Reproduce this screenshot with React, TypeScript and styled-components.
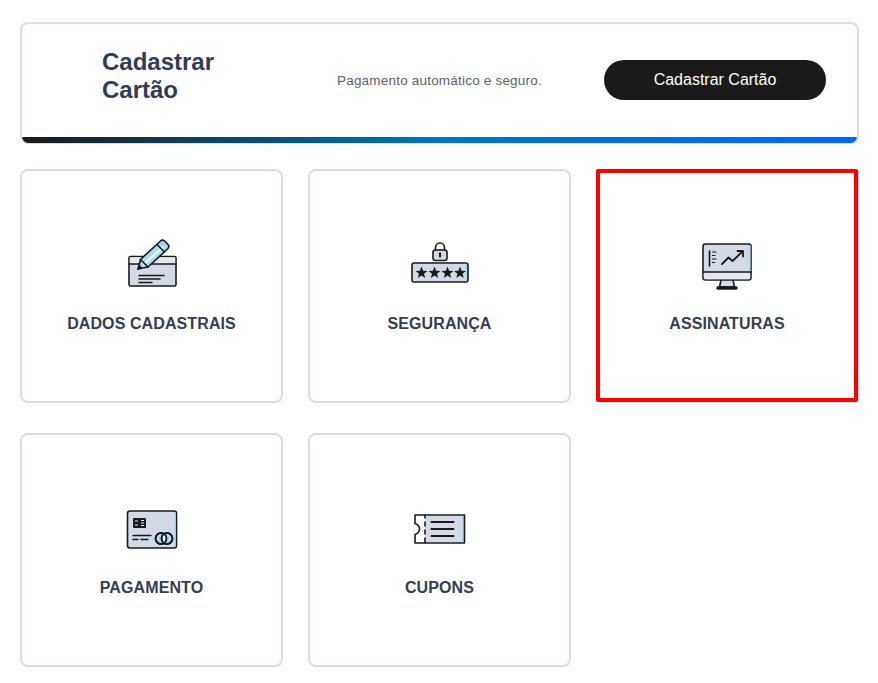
import { JSX } from "react";
import styled, { createGlobalStyle } from "styled-components";

const colors = {
  border: "#d8dde8",
  title: "#2e3c58",
  label: "#343e50",
  dark: "#1a1a1a",
  fill: "#d3dae6",
  light: "#a9d9f5",
};

const GlobalStyle = createGlobalStyle`
  html, body {
    margin: 0;
    background: #fff;
    font-family: "Liberation Sans", Arial, sans-serif;
  }
  * {
    box-sizing: border-box;
  }
`;

const Page = styled.div`
  width: 878px;
  height: 683px;
  padding: 22px 19px 0 20px;
  overflow: hidden;
`;

const Banner = styled.section`
  height: 122px;
  border: 2px solid ${colors.border};
  border-bottom-width: 1px;
  border-radius: 8px;
  display: flex;
  flex-direction: column;
  overflow: hidden;
  margin-bottom: 25px;
`;

const BannerBody = styled.div`
  flex: 1;
  display: flex;
  align-items: center;
  padding: 0 31px 1px 80px;
`;

const BannerTitle = styled.h2`
  margin: 0 0 9px;
  width: 235px;
  font-size: 24px;
  line-height: 28px;
  font-weight: 700;
  color: ${colors.title};
`;

const BannerText = styled.p`
  margin: 0;
  font-size: 13.5px;
  color: #5a5f68;
  letter-spacing: 0.2px;
`;

const BannerButton = styled.button`
  margin-left: auto;
  width: 222px;
  height: 40px;
  border: 0;
  border-radius: 20px;
  background: ${colors.dark};
  color: #fff;
  font-family: inherit;
  font-size: 16px;
  font-weight: 400;
  cursor: pointer;
`;

const GradientBar = styled.div`
  height: 6px;
  background: linear-gradient(90deg, ${colors.dark}, #0077b6 50%, #0066ff);
`;

const Grid = styled.div`
  display: grid;
  grid-template-columns: repeat(3, 263px);
  grid-auto-rows: 234px;
  column-gap: 25px;
  row-gap: 30px;
`;

const Tile = styled.a<{ $active?: boolean }>`
  display: flex;
  flex-direction: column;
  align-items: center;
  justify-content: center;
  gap: 24px;
  background: #fff;
  border: 2px solid ${colors.border};
  border-radius: 8px;
  cursor: pointer;
  ${(p) =>
    p.$active &&
    `
    border: 4px solid #fe0000;
    border-radius: 2px;
    margin: 0 1px 1px 0;
    box-shadow: 1px 1px 0 ${colors.border};
  `}
`;

const TileLabel = styled.span`
  font-size: 16px;
  line-height: 20px;
  font-weight: 700;
  letter-spacing: 0.1px;
  color: ${colors.label};
`;

const Icon = styled.svg.attrs({ width: 60, height: 52, viewBox: "0 0 60 52" })`
  display: block;
  fill: none;
  stroke: ${colors.dark};
  stroke-width: 1.6;
  stroke-linejoin: round;
  stroke-linecap: round;
`;

const Star = ({ x }: { x: number }) => (
  <path
    transform={`translate(${x} 34.5)`}
    d="M0-6l1.6 4.2 4.4.2-3.5 2.8 1.2 4.4L0 3l-3.7 2.6 1.2-4.4L-6-1.6l4.4-.2z"
    fill={colors.dark}
    stroke="none"
  />
);

const PenIcon = () => (
  <Icon>
    <rect x="7" y="18.5" width="47" height="29.5" rx="1.5" fill={colors.fill} />
    <path d="M7.8 19.3h45.4v6.5H7.8z" fill="#e4e8ef" stroke="none" />
    <path d="M7 26h47" />
    <path d="M17 37.5h25M17 41h21M17 44.5h13" strokeWidth="1.5" />
    <path
      d="M16 31l2.5-9.5L38.5 3a3 3 0 0 1 4 0l3.5 3.5a3 3 0 0 1 0 4L26 29z"
      fill={colors.light}
    />
    <path d="M41 9L22 26" stroke="#fff" strokeWidth="2" />
    <path d="M18.5 21.5L26 29M35 6.5l7.5 7.5" />
    <path d="M16 31l1-3.5 2.5 2.5z" fill={colors.dark} />
  </Icon>
);

const LockIcon = () => (
  <Icon>
    <rect x="2" y="25" width="56" height="19" rx="2" fill={colors.fill} />
    <path d="M56.2 26.5v16" stroke={colors.light} />
    <rect x="23" y="12" width="14" height="10.5" rx="2.5" fill={colors.fill} />
    <path d="M25.5 12V9.5a4.5 4.5 0 0 1 9 0V12" />
    <path d="M30 15.5v3" strokeWidth="2.2" />
    <Star x={11.5} />
    <Star x={24.5} />
    <Star x={37.5} />
    <Star x={50} />
  </Icon>
);

const MonitorIcon = () => (
  <Icon>
    <path d="M24 42l-1.5 7h15L36 42" fill={colors.fill} />
    <rect x="20" y="49" width="20" height="2" rx="1" fill={colors.dark} />
    <rect x="6" y="6" width="48" height="36" rx="2.5" fill={colors.fill} />
    <path d="M52.8 8v25" stroke={colors.light} />
    <path d="M6.8 34.8h46.4v5.4a1 1 0 0 1-1 1H7.8a1 1 0 0 1-1-1z" fill="#e4e8ef" stroke="none" />
    <path d="M6 34h48" />
    <path d="M12.5 13v15" />
    <path d="M15.5 14h3.5M15.5 17.5h2.5M15.5 21h3.5M15.5 24.5h2" strokeWidth="1.2" />
    <path d="M25 26l6.5-6.5 4 3.5 10-9.5" strokeWidth="1.8" />
    <path d="M40.5 13h5.5v5.5" strokeWidth="1.8" />
  </Icon>
);

const CardIcon = () => (
  <Icon>
    <rect x="5.5" y="9" width="49" height="37" rx="2.5" fill={colors.fill} />
    <path d="M53 11v33" stroke={colors.light} />
    <rect x="11" y="16" width="13" height="10" rx="1" fill={colors.dark} stroke="none" />
    <path d="M13 19h3M13 23h3M19 18.5h3M19 21h3M19 23.5h3" stroke="#e4e8ef" strokeWidth="1.1" strokeLinecap="butt" />
    <path d="M11 33.5h18M11 37.5h5M19 37.5h7" strokeWidth="1.4" />
    <circle cx="39" cy="36.5" r="5.5" fill={colors.light} />
    <circle cx="45" cy="36.5" r="5.5" fill={colors.light} />
    <path d="M42 32v9" stroke="#fff" strokeWidth="2.4" />
    <circle cx="39" cy="36.5" r="5.5" strokeWidth="1.8" />
    <circle cx="45" cy="36.5" r="5.5" strokeWidth="1.8" />
  </Icon>
);

const TicketIcon = () => (
  <Icon>
    <path d="M5 13h49.5v28H5v-8.5c3-1 4.5-3 4.5-5.5S8 22.5 5 21.5z" fill="#fff" stroke="none" />
    <path d="M15 13.8h39v26.4H15z" fill={colors.fill} stroke="none" />
    <path d="M53 14v26" stroke={colors.light} strokeWidth="1.4" />
    <path d="M5 13h49.5v28H5v-8.5c3-1 4.5-3 4.5-5.5S8 22.5 5 21.5z" />
    <path d="M15 13v3M15 20v4M15 28v4M15 36v5" />
    <path d="M21.5 20h22M21.5 27h22M21.5 34h22" strokeWidth="2" />
  </Icon>
);

const tiles: { label: string; icon: JSX.Element; active?: boolean }[] = [
  { label: "DADOS CADASTRAIS", icon: <PenIcon /> },
  { label: "SEGURANÇA", icon: <LockIcon /> },
  { label: "ASSINATURAS", icon: <MonitorIcon />, active: true },
  { label: "PAGAMENTO", icon: <CardIcon /> },
  { label: "CUPONS", icon: <TicketIcon /> },
];

export default function App() {
  return (
    <>
      <GlobalStyle />
      <Page>
        <Banner>
          <BannerBody>
            <BannerTitle>
              Cadastrar
              <br />
              Cartão
            </BannerTitle>
            <BannerText>Pagamento automático e seguro.</BannerText>
            <BannerButton>Cadastrar Cartão</BannerButton>
          </BannerBody>
          <GradientBar />
        </Banner>
        <Grid>
          {tiles.map((tile) => (
            <Tile key={tile.label} $active={tile.active}>
              {tile.icon}
              <TileLabel>{tile.label}</TileLabel>
            </Tile>
          ))}
        </Grid>
      </Page>
    </>
  );
}
